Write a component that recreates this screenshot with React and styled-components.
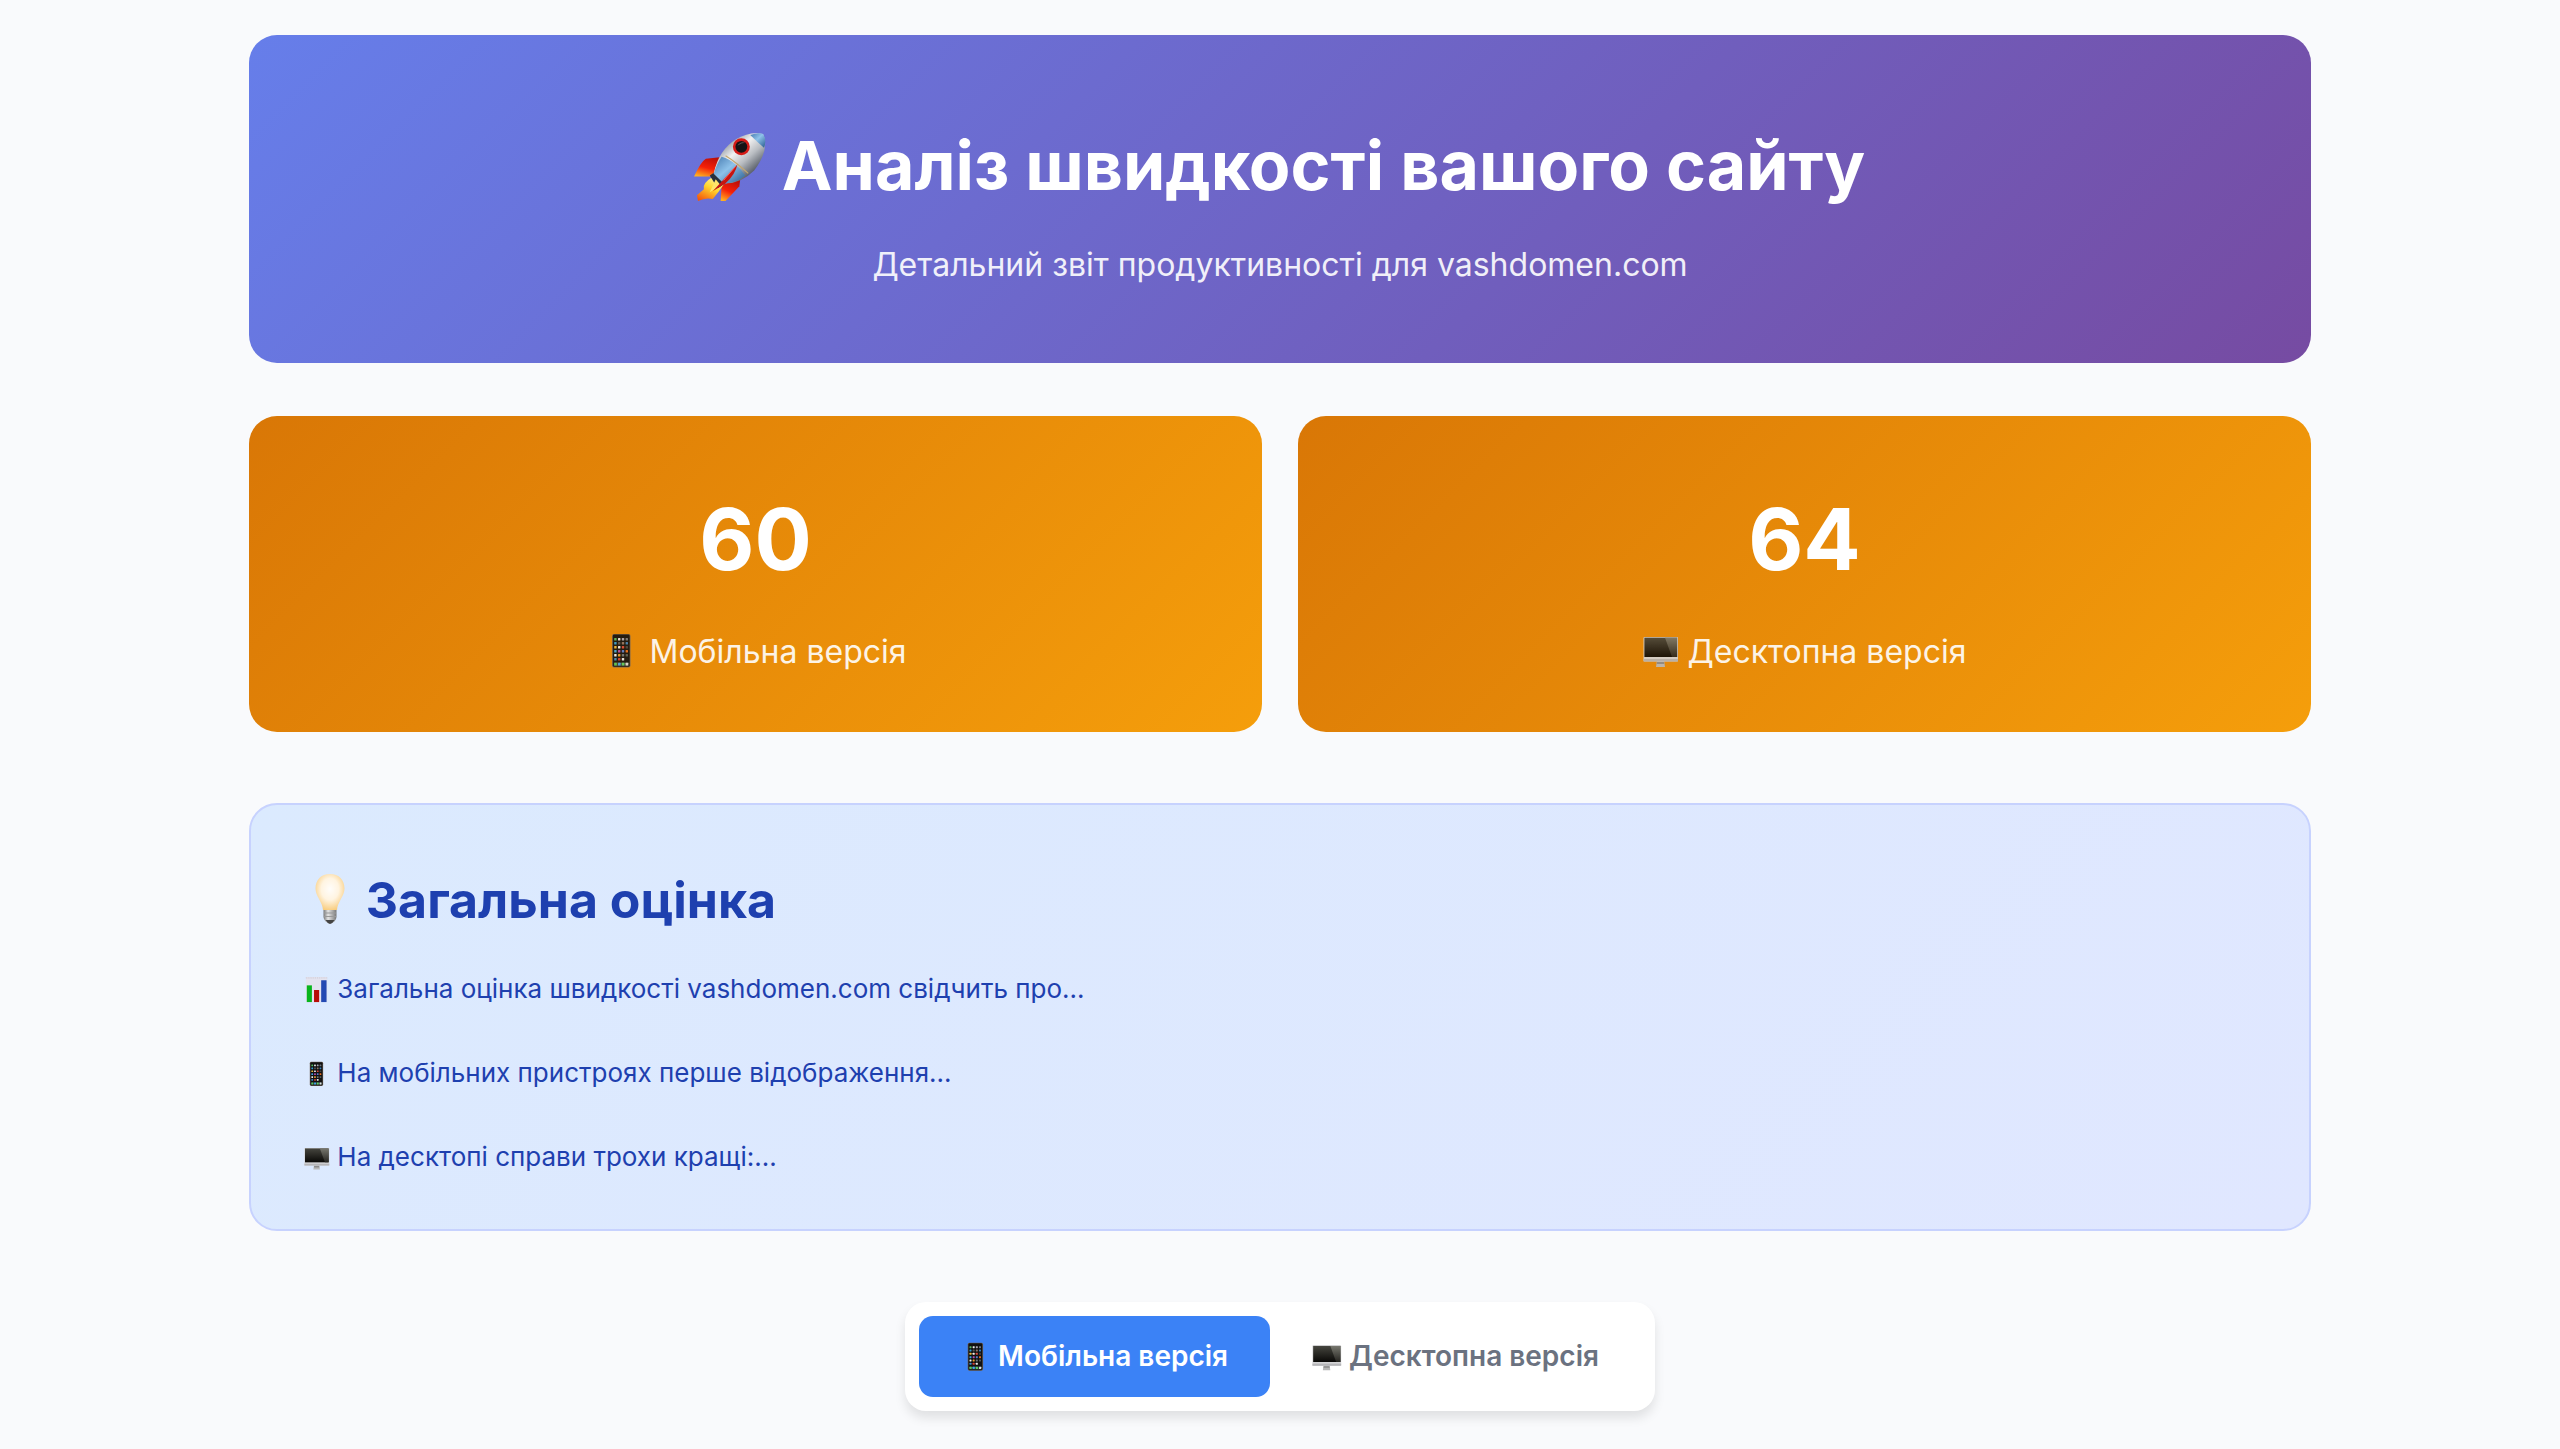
import React, { useId, useState } from "react";
import styled, { createGlobalStyle, css } from "styled-components";

const GlobalStyle = createGlobalStyle`
  *, *::before, *::after { box-sizing: border-box; }
  body {
    margin: 0;
    min-height: 100vh;
    background: #f9fafc;
    font-family: Inter, "Open Sans", "Liberation Sans", sans-serif;
    -webkit-font-smoothing: antialiased;
  }
`;

const Page = styled.main`
  max-width: 2132px;
  margin: 0 auto;
  padding: 35px;
`;

const Hero = styled.header`
  padding: 71px;
  border-radius: 28px;
  text-align: center;
  color: #fff;
  background: linear-gradient(135deg, #667eea 0%, #764ba2 100%);
`;

const HeroTitle = styled.h1`
  --icon-size: 71px;
  margin: 0 0 13px;
  font-size: 68px;
  line-height: 118px;
  font-weight: 700;
`;

const HeroSubtitle = styled.p`
  margin: 0;
  font-size: 32px;
  line-height: 55px;
  opacity: 0.9;
`;

const Scores = styled.section`
  display: grid;
  grid-template-columns: repeat(2, 1fr);
  gap: 36px;
  margin-top: 53px;
`;

const ScoreCard = styled.article`
  padding: 53px;
  border-radius: 28px;
  text-align: center;
  color: #fff;
  background: linear-gradient(135deg, #d97706 0%, #f59e0b 100%);
`;

const ScoreValue = styled.div`
  margin-bottom: 14px;
  font-size: 85px;
  line-height: 141px;
  font-weight: 700;
`;

const ScoreLabel = styled.div`
  --icon-size: 36px;
  font-size: 32px;
  line-height: 55px;
  opacity: 0.9;
`;

const Summary = styled.section`
  margin-top: 71px;
  padding: 53px 53px 51px;
  border: 2px solid #c7d2fe;
  border-radius: 28px;
  color: #1e40af;
  background: linear-gradient(135deg, #dbeafe 0%, #e0e7ff 100%);
`;

const SummaryTitle = styled.h2`
  --icon-size: 50px;
  margin: 0 0 26px;
  font-size: 50px;
  line-height: 84px;
  font-weight: 700;
`;

const SummaryText = styled.div`
  --icon-size: 26px;
  display: grid;
  gap: 42px;
  font-size: 26px;
  line-height: 42px;

  p { margin: 0; }
`;

const TabRow = styled.div`
  display: flex;
  justify-content: center;
  margin-top: 71px;
`;

const Tabs = styled.div`
  display: flex;
  padding: 14px;
  border-radius: 21px;
  background: #fff;
  box-shadow: 0 7px 11px rgba(0, 0, 0, 0.1);
`;

const Tab = styled.button`
  --icon-size: 30px;
  padding: 18px 42px;
  border: 0;
  border-radius: 14px;
  font: inherit;
  font-size: 28px;
  line-height: 45px;
  font-weight: 600;
  cursor: pointer;
  color: #6b7280;
  background: transparent;

  ${({ $active }) => $active && css`
    color: #fff;
    background: #3b82f6;
  `}
`;

const Icon = styled.svg`
  display: inline-block;
  width: var(--icon-size);
  height: var(--icon-size);
  vertical-align: -0.2em;
  overflow: visible;
`;

function Rocket() {
  const id = useId();
  return (
    <Icon viewBox="1 0 72 72" aria-hidden="true">
      <defs>
        <linearGradient id={`${id}b`} x1="0.2" y1="0.2" x2="0.75" y2="0.8">
          <stop offset="0" stopColor="#8b929c" />
          <stop offset="0.35" stopColor="#f1f1f1" />
          <stop offset="0.65" stopColor="#b9bdc2" />
          <stop offset="1" stopColor="#555b66" />
        </linearGradient>
        <linearGradient id={`${id}f`} x1="0.8" y1="0" x2="0.2" y2="1">
          <stop offset="0" stopColor="#fffbb0" />
          <stop offset="0.45" stopColor="#ffd72e" />
          <stop offset="1" stopColor="#f4570b" />
        </linearGradient>
        <linearGradient id={`${id}r`} x1="0.6" y1="0" x2="0.2" y2="1">
          <stop offset="0" stopColor="#b90d08" />
          <stop offset="0.55" stopColor="#f52008" />
          <stop offset="1" stopColor="#ffae20" />
        </linearGradient>
        <linearGradient id={`${id}n`} x1="0" y1="0" x2="1" y2="1">
          <stop offset="0" stopColor="#4478ae" />
          <stop offset="0.45" stopColor="#8ec2ea" />
          <stop offset="1" stopColor="#275b8f" />
        </linearGradient>
      </defs>
      <path d="M31 24 12 26Q7 29 0 44L16 44Q22 42 25 36Z" fill={`url(#${id}r)`} />
      <path d="M47 46 46 54 32 69H27L28 53Z" fill={`url(#${id}r)`} />
      <path d="M18 45Q8 51 10 57L3 63 4 69Q12 65 19 67 25 60 31 51Z" fill={`url(#${id}f)`} />
      <path d="M16 43 22 39 32 51 24 56Z" fill="#27303e" />
      <path d="M22 47 16 60 27 53Z" fill="#ffe66a" />
      <path d="M20 41Q25 17 43 6 57-2 70 1 77 17 61 38 47 52 30 51Z" fill={`url(#${id}b)`} />
      <path d="M57 2Q65-1 70 1 74 7 71 15 64 9 57 2Z" fill={`url(#${id}n)`} />
      <path d="M28 24Q36 26 42 32 48 37 52 43 43 51 30 51L20 41Q23 31 28 24Z" fill={`url(#${id}n)`} />
      <path d="M32 23Q42 29 55 41" fill="none" stroke="#c4a76c" strokeWidth="1.2" />
      <path d="M44 32 19 59 32 51Q42 42 44 32Z" fill="#c7150f" />
      <path d="M42 34 30 48" stroke="#ff625c" strokeWidth="1" />
      <circle cx="48" cy="14" r="8.6" fill="#d51b17" />
      <circle cx="48" cy="14" r="6" fill="#171314" />
      <path d="M44 13Q47 8 52 10 48 10 44 13Z" fill="#5c5557" />
    </Icon>
  );
}

const SCREEN_COLORS = ["#55b95f", "#e8e8e8", "#a9a9b8", "#72777e", "#2e9ed5", "#565656", "#8d7467", "#397eb7", "#e7b83e", "#eeeeee", "#d9483b", "#444444", "#3ea5dd", "#b84bab", "#557ccc", "#e36b20", "#f4f4f4", "#e99e2b", "#6d7379", "#505b58", "#3b87c8", "#d34036", "#e9e9e9", "#151515"];

function Phone() {
  return (
    <Icon viewBox="0 0 36 36" aria-hidden="true">
      <rect x="8" y="1" width="18.5" height="33.5" rx="2" fill="#74665a" />
      <rect x="8.8" y="1.6" width="16.9" height="32.2" rx="1.4" fill="#111" />
      {SCREEN_COLORS.map((color, i) => (
        <rect key={i} x={10.2 + (i % 4) * 3.8} y={5 + Math.floor(i / 4) * 4} width="2.4" height="2.4" rx="0.5" fill={color} />
      ))}
      <path d="M9.8 29.3H24.8V33H9.8Z" fill="#33413d" />
      {["#54c957", "#40a7ed", "#5bd165", "#dedede"].map((color, i) => (
        <rect key={color} x={10.2 + i * 3.8} y="29.8" width="2.6" height="2.6" rx="0.5" fill={color} />
      ))}
    </Icon>
  );
}

function Monitor() {
  const id = useId();
  return (
    <Icon viewBox="0 0 36 36" aria-hidden="true">
      <defs>
        <linearGradient id={`${id}s`} x1="0" y1="0" x2="0" y2="1">
          <stop offset="0" stopColor="#46463f" />
          <stop offset="1" stopColor="#090806" />
        </linearGradient>
        <linearGradient id={`${id}g`} x1="0" y1="0" x2="0" y2="1">
          <stop offset="0" stopColor="#77776e" />
          <stop offset="1" stopColor="#24231f" />
        </linearGradient>
      </defs>
      <path d="M14 27H21L22 34H13Z" fill="#b9b9b9" />
      <path d="M14 29H21L21.3 31H13.7Z" fill="#8c8c8c" />
      <rect x="0.5" y="4" width="34.5" height="24.5" rx="1" fill="#d4d4d6" />
      <path d="M0.5 26H35V28.5H0.5Z" fill="#b5b5b8" />
      <rect x="1.4" y="4.7" width="32.7" height="19.3" fill={`url(#${id}s)`} />
      <path d="M22 4.7H34.1V24H29Z" fill={`url(#${id}g)`} />
    </Icon>
  );
}

function Bulb() {
  const id = useId();
  return (
    <Icon viewBox="-1 4 50 50" aria-hidden="true">
      <defs>
        <radialGradient id={`${id}l`} cx="0.5" cy="0.42" r="0.6">
          <stop offset="0" stopColor="#fffdfa" />
          <stop offset="0.5" stopColor="#fff4e1" />
          <stop offset="1" stopColor="#f8cc7d" />
        </radialGradient>
        <linearGradient id={`${id}m`}>
          <stop offset="0" stopColor="#777" />
          <stop offset="0.35" stopColor="#e4e4e4" />
          <stop offset="1" stopColor="#777" />
        </linearGradient>
      </defs>
      <path d="M25 0C16 0 10.5 6 10.5 14.5 10.5 22 17.5 28 18 36H32C32.5 28 39.5 22 39.5 14.5 39.5 6 34 0 25 0Z" fill={`url(#${id}l)`} />
      <path d="M18.5 36H31.5V43Q31 48 25 50 19 48 18.5 43Z" fill={`url(#${id}m)`} />
      <path d="M19 39H31M19 42.5H31" stroke="#999" strokeWidth="1" />
      <path d="M20.5 46H29.5Q28 49 25 50 22 49 20.5 46Z" fill="#444" />
    </Icon>
  );
}

function BarChart() {
  return (
    <Icon viewBox="0 0 28 28" aria-hidden="true">
      <rect x="2" y="0" width="23" height="27" fill="#e4e3ef" />
      <path d="M2 1H25" stroke="#c9c5cd" strokeWidth="1" strokeDasharray="1 1" />
      <rect x="3" y="9" width="5.5" height="18" fill="#08b51d" />
      <rect x="10.8" y="14" width="5.5" height="13" fill="#b80e08" />
      <rect x="18.5" y="3.5" width="5.8" height="23.5" fill="#2349b3" />
    </Icon>
  );
}

const VERSIONS = [
  { id: "mobile", label: "Мобільна версія", score: 60, Glyph: Phone },
  { id: "desktop", label: "Десктопна версія", score: 64, Glyph: Monitor },
];

export default function App() {
  const [active, setActive] = useState("mobile");
  return (
    <>
      <GlobalStyle />
      <Page>
        <Hero>
          <HeroTitle><Rocket /> Аналіз швидкості вашого сайту</HeroTitle>
          <HeroSubtitle>Детальний звіт продуктивності для vashdomen.com</HeroSubtitle>
        </Hero>
        <Scores>
          {VERSIONS.map(({ id, label, score, Glyph }) => (
            <ScoreCard key={id}>
              <ScoreValue>{score}</ScoreValue>
              <ScoreLabel><Glyph /> {label}</ScoreLabel>
            </ScoreCard>
          ))}
        </Scores>
        <Summary>
          <SummaryTitle><Bulb /> Загальна оцінка</SummaryTitle>
          <SummaryText>
            <p><BarChart /> Загальна оцінка швидкості vashdomen.com свідчить про...</p>
            <p><Phone /> На мобільних пристроях перше відображення...</p>
            <p><Monitor /> На десктопі справи трохи кращі:...</p>
          </SummaryText>
        </Summary>
        <TabRow>
          <Tabs role="tablist">
            {VERSIONS.map(({ id, label, Glyph }) => (
              <Tab key={id} type="button" role="tab" aria-selected={active === id} $active={active === id} onClick={() => setActive(id)}>
                <Glyph /> {label}
              </Tab>
            ))}
          </Tabs>
        </TabRow>
      </Page>
    </>
  );
}
